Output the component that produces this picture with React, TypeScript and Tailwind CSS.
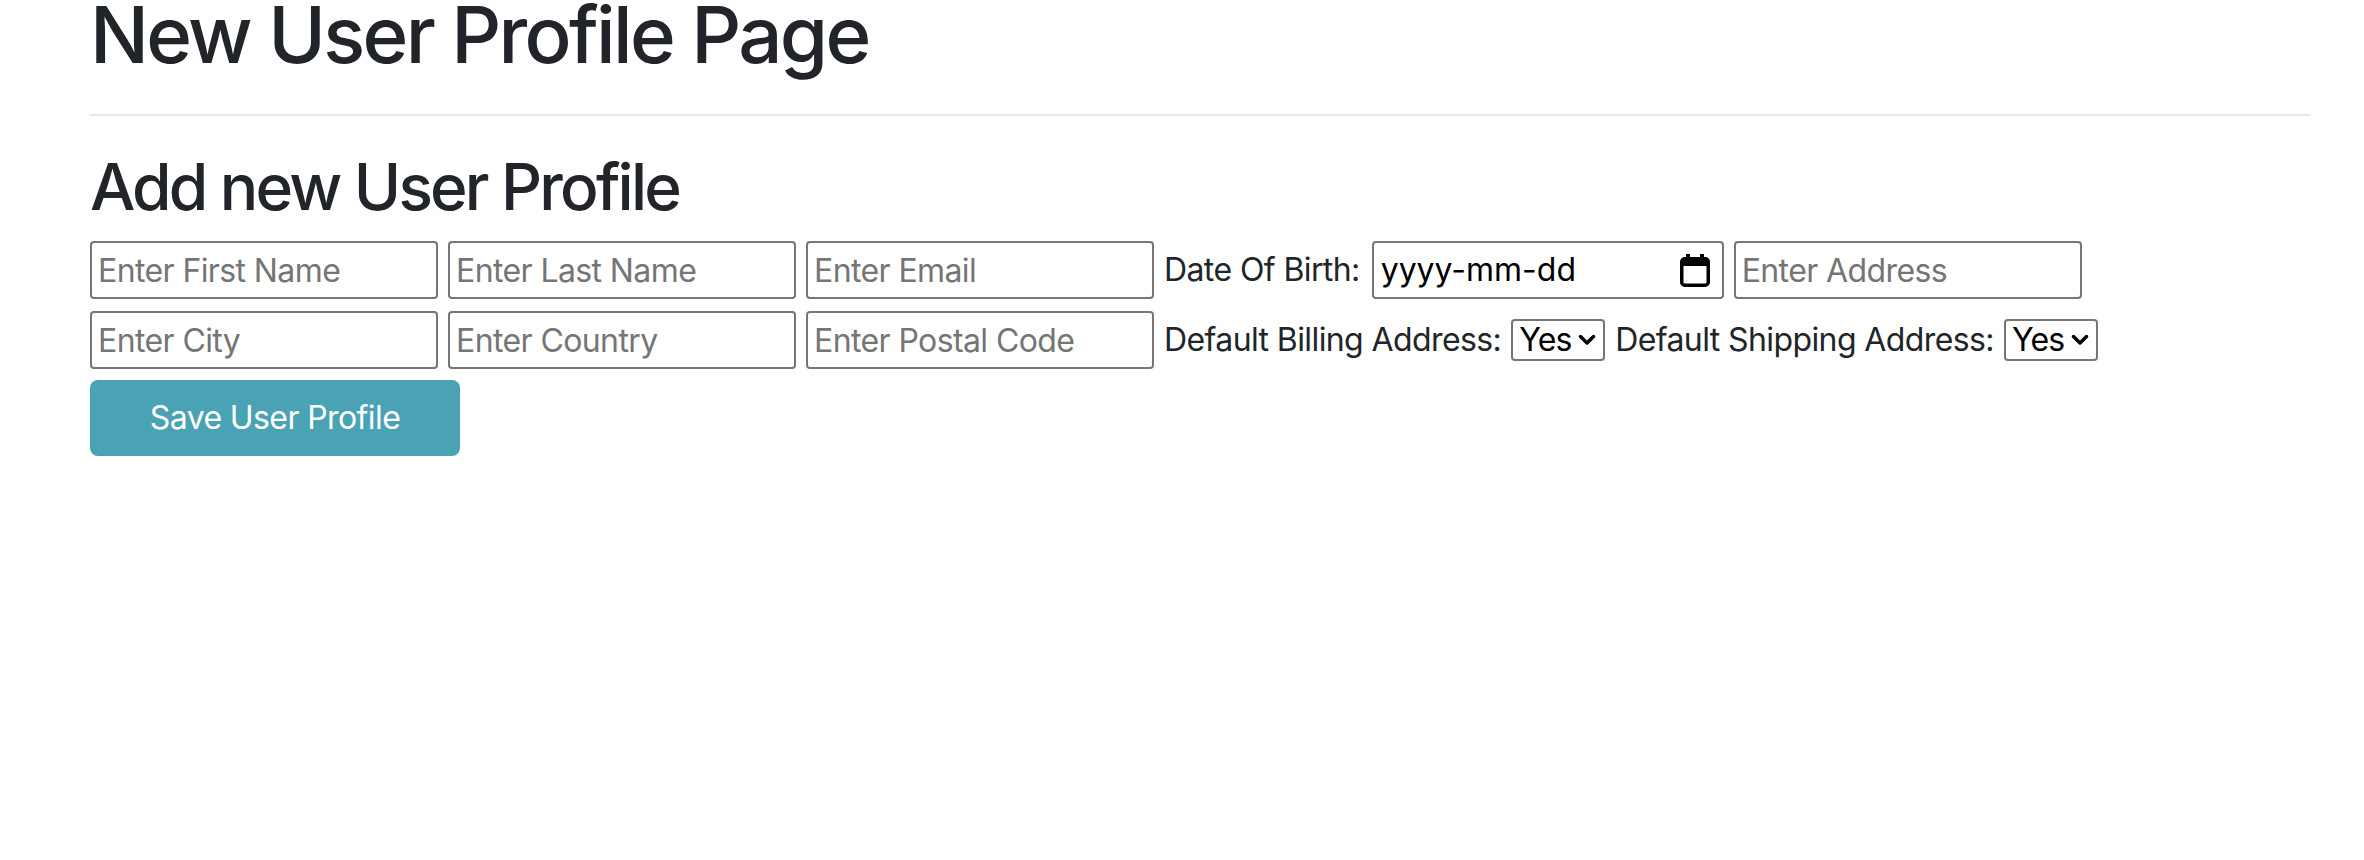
import React from "react";

const inputCls =
  "box-border h-[58px] w-[348px] shrink-0 rounded-[4px] border-2 border-[#767676] bg-white px-[6px] text-[32px] leading-[40px] tracking-[-0.6px] text-black placeholder:text-[#757575] outline-none";

function Field({ placeholder }: { placeholder: string }) {
  return <input type="text" placeholder={placeholder} className={inputCls} />;
}

function Label({ children }: { children: React.ReactNode }) {
  return (
    <span className="shrink-0 whitespace-nowrap text-[32px] leading-[40px] tracking-[-0.6px] text-[#212529]">
      {children}
    </span>
  );
}

function CalendarIcon() {
  return (
    <svg width="30" height="33" viewBox="0 0 30 33" className="shrink-0">
      <rect x="6" y="0" width="4" height="6" fill="#000" />
      <rect x="20" y="0" width="4" height="6" fill="#000" />
      <rect x="1.75" y="4.75" width="26.5" height="26.5" rx="3" fill="none" stroke="#000" strokeWidth="3.5" />
      <rect x="1" y="4" width="28" height="8" rx="3" fill="#000" />
    </svg>
  );
}

function Chevron() {
  return (
    <svg width="20" height="14" viewBox="0 0 20 14" className="shrink-0">
      <path d="M3.5 3.5 L10 10 L16.5 3.5" fill="none" stroke="#000" strokeWidth="3.5" strokeLinecap="round" strokeLinejoin="round" />
    </svg>
  );
}

function SelectBox() {
  return (
    <div className="box-border flex h-[42px] w-[94px] shrink-0 items-center justify-between rounded-[4px] border-2 border-[#767676] bg-white pl-[6px] pr-[6px]">
      <span className="text-[32px] leading-[38px] tracking-[-0.8px] text-black">Yes</span>
      <Chevron />
    </div>
  );
}

export default function App() {
  return (
    <div className="min-h-[860px] bg-white pl-[90px] font-['Inter',sans-serif] text-[#212529]">
      <h1 className="pt-[2px] text-[78px] font-medium leading-[66px] tracking-[-2.7px] text-[#212529]">New User Profile Page</h1>
      <hr className="mt-[46px] w-[2220px] border-0 border-t-2 border-[#e6e6e6]" />
      <h2 className="mt-[39px] text-[64px] font-medium leading-[64px] tracking-[-2.8px] text-[#212529]">Add new User Profile</h2>

      <div className="mt-[22px] flex items-center gap-[10px]">
        <Field placeholder="Enter First Name" />
        <Field placeholder="Enter Last Name" />
        <Field placeholder="Enter Email" />
        <Label>Date Of Birth:</Label>
        <div className="ml-[2px] box-border flex h-[58px] w-[352px] shrink-0 items-center justify-between rounded-[4px] border-2 border-[#767676] bg-white pl-[7px] pr-[12px]">
          <span className="text-[32px] leading-[40px] tracking-[0px] text-black">yyyy-mm-dd</span>
          <CalendarIcon />
        </div>
        <Field placeholder="Enter Address" />
      </div>

      <div className="mt-[12px] flex items-center gap-[10px]">
        <Field placeholder="Enter City" />
        <Field placeholder="Enter Country" />
        <Field placeholder="Enter Postal Code" />
        <Label>Default Billing Address:</Label>
        <SelectBox />
        <Label>Default Shipping Address:</Label>
        <SelectBox />
      </div>

      <button
        type="button"
        className="mt-[11px] box-border h-[76px] w-[370px] rounded-[8px] bg-[#4aa2b5] text-[32px] leading-[48px] tracking-[-0.6px] text-white"
      >
        Save User Profile
      </button>
    </div>
  );
}
